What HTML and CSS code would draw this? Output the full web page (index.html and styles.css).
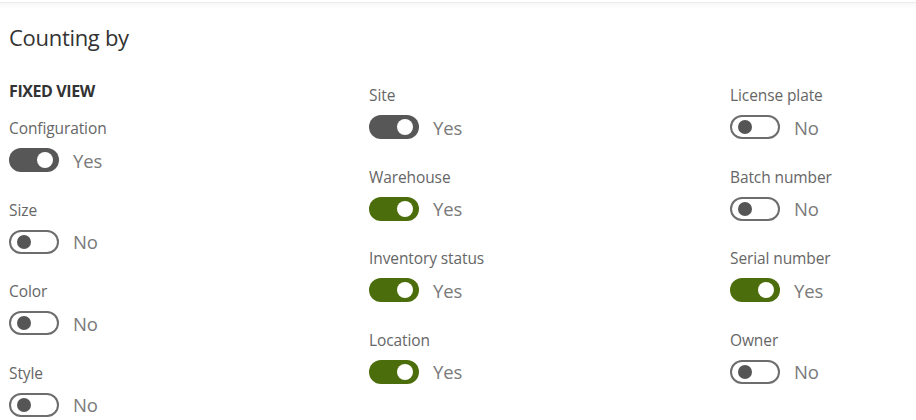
FILE: index.html
```html
<!DOCTYPE html>
<html>
<head>
<meta charset="utf-8">
<link rel="stylesheet" href="styles.css">
</head>
<body>
<div class="topline"></div>
<h1 class="title">Counting by</h1>
<div class="grid">
  <div class="col col1">
    <div class="section">FIXED VIEW</div>
    <div class="field"><div class="label">Configuration</div><div class="row"><span class="toggle on dark"><span class="knob"></span></span><span class="val">Yes</span></div></div>
    <div class="field"><div class="label">Size</div><div class="row"><span class="toggle off"><span class="knob"></span></span><span class="val">No</span></div></div>
    <div class="field"><div class="label">Color</div><div class="row"><span class="toggle off"><span class="knob"></span></span><span class="val">No</span></div></div>
    <div class="field"><div class="label">Style</div><div class="row"><span class="toggle off"><span class="knob"></span></span><span class="val">No</span></div></div>
  </div>
  <div class="col">
    <div class="field"><div class="label">Site</div><div class="row"><span class="toggle on dark"><span class="knob"></span></span><span class="val">Yes</span></div></div>
    <div class="field"><div class="label">Warehouse</div><div class="row"><span class="toggle on green"><span class="knob"></span></span><span class="val">Yes</span></div></div>
    <div class="field"><div class="label">Inventory status</div><div class="row"><span class="toggle on green"><span class="knob"></span></span><span class="val">Yes</span></div></div>
    <div class="field"><div class="label">Location</div><div class="row"><span class="toggle on green"><span class="knob"></span></span><span class="val">Yes</span></div></div>
  </div>
  <div class="col">
    <div class="field"><div class="label">License plate</div><div class="row"><span class="toggle off"><span class="knob"></span></span><span class="val">No</span></div></div>
    <div class="field"><div class="label">Batch number</div><div class="row"><span class="toggle off"><span class="knob"></span></span><span class="val">No</span></div></div>
    <div class="field"><div class="label">Serial number</div><div class="row"><span class="toggle on green"><span class="knob"></span></span><span class="val">Yes</span></div></div>
    <div class="field"><div class="label">Owner</div><div class="row"><span class="toggle off"><span class="knob"></span></span><span class="val">No</span></div></div>
  </div>
</div>
</body>
</html>
```
FILE: styles.css
```css
html, body {
  margin: 0;
  padding: 0;
  background: #fff;
  font-family: "Open Sans", "Noto Sans", sans-serif;
  overflow: hidden;
  height: 420px;
}
.topline {
  height: 6px;
  margin-top: 2px;
  border-top: 1px solid #ececec;
  background: linear-gradient(#f8f8f8, #fff);
}
.title {
  margin: 0;
  padding: 14px 0 0 9px;
  font-size: 22px;
  font-weight: 400;
  line-height: 28px;
  color: #333;
  letter-spacing: -0.3px;
}
.grid {
  display: grid;
  grid-template-columns: 360px 361px 1fr;
  padding-left: 9px;
  margin-top: 34px;
}
.col1 { margin-top: -4px; }
.section {
  font-size: 16px;
  font-weight: 700;
  line-height: 20px;
  color: #333;
  margin-bottom: 17px;
  letter-spacing: -0.4px;
}
.field {
  margin-bottom: 27.5px;
}
.field:last-child { margin-bottom: 0; }
.label {
  font-size: 15.5px;
  line-height: 20px;
  color: #666;
  letter-spacing: -0.1px;
}
.row {
  display: flex;
  align-items: center;
  margin-top: 10px;
  height: 24px;
}
.toggle {
  box-sizing: border-box;
  width: 50px;
  height: 24px;
  border-radius: 12px;
  position: relative;
  display: inline-block;
  flex: none;
}
.toggle .knob {
  position: absolute;
  border-radius: 50%;
  top: 50%;
}
.toggle.on .knob {
  width: 16px;
  height: 16px;
  right: 6px;
  margin-top: -8px;
  background: #fff;
}
.toggle.dark { background: #575757; }
.toggle.green { background: #4c6d0b; }
.toggle.off {
  border: 2px solid #6d6d6d;
  background: #fff;
}
.toggle.off .knob {
  width: 14px;
  height: 14px;
  left: 6px;
  margin-top: -7px;
  background: #555;
}
.val {
  margin-left: 14px;
  font-size: 18.5px;
  color: #7a7a7a;
  letter-spacing: -0.1px;
}
```
